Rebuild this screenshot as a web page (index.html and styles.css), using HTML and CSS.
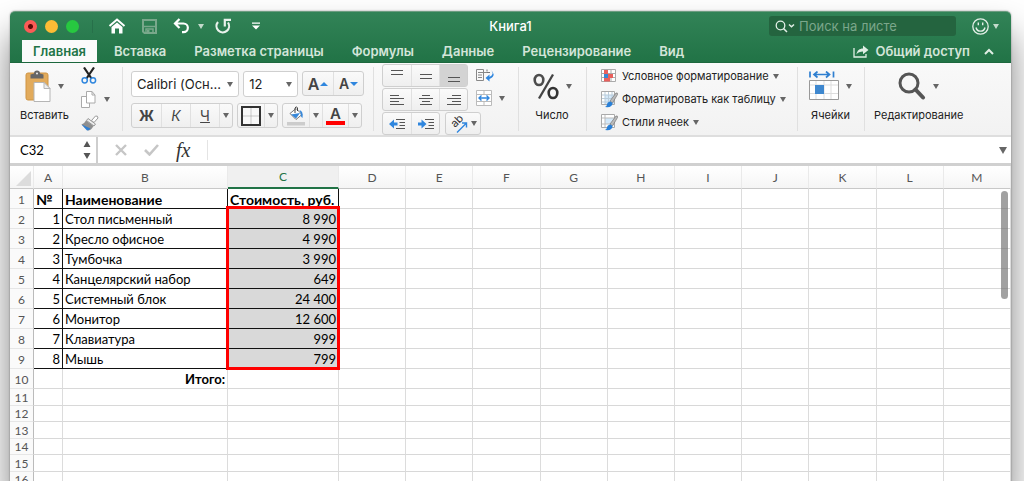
FILE: index.html
```html
<!DOCTYPE html>
<html lang="ru">
<head>
<meta charset="utf-8">
<meta name="viewport" content="width=device-width, initial-scale=1">
<title>Книга1</title>
<link rel="stylesheet" href="styles.css">
</head>
<body>
<main class="window">
  <header class="top">
    <div class="titlebar">
      <div class="title-left">
        <div class="lights">
          <button class="light red" aria-label="Закрыть"></button>
          <button class="light yellow" aria-label="Свернуть"></button>
          <button class="light green" aria-label="Развернуть"></button>
        </div>
        <button class="plain home" aria-label="Домой"><svg width="18" height="16" viewBox="0 0 18 16"><path d="M1.500 8 9 1.500l7.500 6.500" fill="none" stroke="#fff" stroke-width="2"/><path d="M3.500 9 9 4.500 14.500 9v6.500H11v-5H7v5H3.500z" fill="#fff"/></svg></button>
        <button class="plain save" aria-label="Сохранить"><svg width="15" height="15" viewBox="0 0 15 15"><path d="M1 1h13v13H2.500L1 12.500z" fill="none" stroke="#79a88b" stroke-width="2"/><path d="M1 7.500h13M4 14v-4h7v4" fill="none" stroke="#79a88b" stroke-width="1.500"/><path d="M5 11h2.500v3H5z" fill="#79a88b"/></svg></button>
        <button class="plain undo" aria-label="Отменить"><svg width="18" height="16" viewBox="0 0 18 16"><path d="M6.500 1 2 5.500 6.500 10M2.500 5.500h8a4.300 4.300 0 0 1 0 8.700H9" fill="none" stroke="#fff" stroke-width="2.200"/></svg><i class="caret pale"></i></button>
        <button class="plain redo" aria-label="Повторить"><svg width="17" height="16" viewBox="0 0 17 16"><path d="M3 4A6.300 6.300 0 1 0 13 4.500M9.800 8.500V1.800H16" fill="none" stroke="#e9f2ec" stroke-width="2.200"/></svg></button>
        <button class="plain" aria-label="Настройка панели"><svg width="8" height="8" viewBox="0 0 8 8"><path d="M0 .5h8v1.300H0zM0 3.500h8L4 7.500z" fill="#fff"/></svg></button>
      </div>
      <h1 class="title">Книга1</h1>
      <div class="title-right">
        <label class="search"><svg width="20" height="13" viewBox="0 0 20 13"><circle cx="5.500" cy="5.500" r="4.300" fill="none" stroke="#e3efe7" stroke-width="1.300"/><path d="m8.500 8.500 3.500 3.500M14 4.500l2.500 2.300L19 4.500" fill="none" stroke="#e3efe7" stroke-width="1.500"/></svg><input type="search" placeholder="Поиск на листе" aria-label="Поиск на листе"></label>
        <button class="plain face" aria-label="Отзыв"><svg width="17" height="17" viewBox="0 0 17 17"><circle cx="8.500" cy="8.500" r="7.700" fill="none" stroke="#e3efe7" stroke-width="1.300"/><path d="M4 9.500a4.600 4.600 0 0 0 9 0M6.300 4.500v2.800M10.700 4.500v2.800" fill="none" stroke="#e3efe7" stroke-width="1.400"/></svg><i class="caret pale"></i></button>
      </div>
    </div>
    <nav class="tabs">
      <button class="tab active">Главная</button>
      <button class="tab">Вставка</button>
      <button class="tab">Разметка страницы</button>
      <button class="tab">Формулы</button>
      <button class="tab">Данные</button>
      <button class="tab">Рецензирование</button>
      <button class="tab">Вид</button>
      <button class="tab share"><svg width="16" height="13" viewBox="0 0 16 13"><path d="M1 3v9h12V9" fill="none" stroke="#dfeee4" stroke-width="1.300"/><path d="M3.500 9.500C4 5.500 6.500 3.500 10 3.500V.5L15.500 5 10 9.300V6.500C7 6.500 5 7.300 3.500 9.500z" fill="#dfeee4"/></svg>Общий доступ</button>
      <button class="plain fold" aria-label="Свернуть ленту"><svg width="10" height="7" viewBox="0 0 10 7"><path d="m1 6 4-4 4 4" fill="none" stroke="#dfeee4" stroke-width="2"/></svg></button>
    </nav>
  </header>

  <section class="ribbon" aria-label="Главная">
    <div class="group clip">
      <button class="big">
        <span class="icon-row"><svg width="26" height="32" viewBox="0 0 26 32"><rect x="1" y="3" width="22" height="27" rx="2" fill="#e2ab5c" stroke="#cf9443"/><path d="M5.500 8.500V4.500L9 3.500a3 3 0 0 1 6 0l3.500 1v4z" fill="#666"/><circle cx="12" cy="3.400" r="1" fill="#eee"/><path d="M9 12.500h10l6 6v13H9z" fill="#fff" stroke="#b5b5b5"/><path d="M19 12.500v6h6z" fill="#eee" stroke="#b5b5b5"/></svg><i class="caret"></i></span>
        <span>Вставить</span>
      </button>
      <div class="clip-tools">
        <button class="plain" aria-label="Вырезать"><svg width="16" height="17" viewBox="0 0 16 17"><path d="m3 .5 7.500 11M13 .5 5.500 11.500" stroke="#222" stroke-width="2.200"/><circle cx="3.700" cy="13.300" r="2.600" fill="none" stroke="#2f86de" stroke-width="1.500"/><circle cx="12" cy="13.300" r="2.600" fill="none" stroke="#2f86de" stroke-width="1.500"/></svg></button>
        <button class="plain copy" aria-label="Копировать"><svg width="15" height="17" viewBox="0 0 15 17"><path d="M.5 5.500h5l3 3v8h-8z" fill="#fff" stroke="#aaa"/><path d="M5.500.5h5.500l3 3.500v8H5.500zM11 .5V4h3" fill="#fff" stroke="#aaa"/></svg><i class="caret"></i></button>
        <button class="plain" aria-label="Формат по образцу"><svg width="18" height="16" viewBox="0 0 18 16"><path d="m10.500 5.500 4-4.500q2.500-.5 2.500 2L13 7.500z" fill="#fff" stroke="#999"/><path d="M7 3.500 14.500 9l-1.500 2-7.500-5.500z" fill="#eee" stroke="#999"/><path d="M5 5.500 12.500 11Q10 15.500 7 15.500L.5 9.500Q3.500 8.500 5 5.500z" fill="#8f8f8f"/><path d="M.5 9.500 9.500 13.500Q8 15.800 6 15.500z" fill="#2f7fd3"/></svg></button>
      </div>
    </div>

    <div class="group font">
      <div class="row">
        <label class="combo family"><select aria-label="Шрифт"><option>Calibri (Осн...</option></select><i class="caret"></i></label>
        <label class="combo size"><select aria-label="Размер"><option>12</option></select><i class="caret"></i></label>
        <div class="seg tall"><button class="w30" aria-label="Увеличить шрифт"><b class="a-big">A</b><i class="tri up"></i></button><button class="w30" aria-label="Уменьшить шрифт"><b class="a-mid">A</b><i class="tri down"></i></button></div>
      </div>
      <div class="row">
        <div class="seg tall"><button class="w29"><b>Ж</b></button><button class="w29"><em>К</em></button><button class="w29"><u>Ч</u></button><button class="w13" aria-label="Подчеркивание"><i class="caret"></i></button></div>
        <div class="seg tall"><button class="w26" aria-label="Границы"><svg width="20" height="20" viewBox="0 0 20 20"><path d="M1 1h18v18H1z" fill="#f8f8f8" stroke="#333" stroke-width="2"/><path d="M10 2.500v15M2.500 10h15" stroke="#999" stroke-dasharray="1 1"/></svg></button><button class="w13" aria-label="Вид границ"><i class="caret"></i></button></div>
        <div class="seg tall"><button class="w26" aria-label="Заливка"><svg width="20" height="20" viewBox="0 0 20 20"><path d="m4 7.500 6-5 6 6-6 5z" fill="#fff" stroke="#777"/><path d="m5 8.500 9-1.500-4 5.500z" fill="#3788da"/><path d="M9 7V2Q10.500-.5 11.500 2v3" fill="none" stroke="#444"/><path d="M13.500 4q4 1 3 8-2-1-2-5z" fill="#3788da"/><path d="M1 16h18v3.500H1z" fill="#ccc"/></svg></button><button class="w13" aria-label="Цвет заливки"><i class="caret"></i></button><button class="w26" aria-label="Цвет шрифта"><span class="font-color">A</span></button><button class="w13" aria-label="Выбор цвета шрифта"><i class="caret"></i></button></div>
      </div>
    </div>

    <div class="group align">
      <div class="align-top">
        <div class="align-rows">
          <div class="seg"><button class="w28" aria-label="По верхнему краю"><svg width="14" height="14"><path d="M1 1.500h12M1 5.500h12" stroke="#555"/></svg></button><button class="w28" aria-label="По середине"><svg width="14" height="14"><path d="M1 5.500h12M1 9.500h12" stroke="#555"/></svg></button><button class="w28 on" aria-label="По нижнему краю"><svg width="14" height="14"><path d="M1 8.500h12M1 12.500h12" stroke="#555"/></svg></button></div>
          <div class="seg"><button class="w28" aria-label="По левому краю"><svg width="14" height="14"><path d="M0 2.500h9M0 5.500h14M0 8.500h9M0 11.500h14" stroke="#555"/></svg></button><button class="w28" aria-label="По центру"><svg width="14" height="14"><path d="M3 2.500h8M0 5.500h14M3 8.500h8M1 11.500h12" stroke="#555"/></svg></button><button class="w28" aria-label="По правому краю"><svg width="14" height="14"><path d="M5 2.500h9M0 5.500h14M5 8.500h9M0 11.500h14" stroke="#555"/></svg></button></div>
        </div>
        <div class="align-side">
          <button class="plain" aria-label="Перенос текста"><svg width="19" height="14" viewBox="0 0 19 14"><path d="M.5 1.500h7v11h-7zM2 4.500h10M2 7h4M2 9.500h4" fill="none" stroke="#888"/><path d="M11 3.500V1.500M11 4.500h3" stroke="#777"/><path d="M15 2q4 4-1.500 7V6.500L9.500 10l4 3.500V11Q21 7.500 15 2z" fill="#2f86de"/></svg></button>
          <button class="plain merge" aria-label="Объединить"><svg width="16" height="16" viewBox="0 0 16 16"><path d="M.5.500h15v15H.5zM.5 4.500h15M.5 11.500h15M8 .5v4M8 11.500v4" fill="#fff" stroke="#bbb"/><path d="M3 8h10M5.500 5.500 3 8l2.500 2.500M10.500 5.500 13 8l-2.500 2.500" fill="none" stroke="#2f86de" stroke-width="1.400"/></svg><i class="caret"></i></button>
        </div>
      </div>
      <div class="row">
        <div class="seg"><button class="w28" aria-label="Уменьшить отступ"><svg width="16" height="12"><path d="M0 6 5 1.500v3h3.500v3H5v3z" fill="#2f86de"/><path d="M7 1.500h9M10.500 4.500H16M10.500 7.500H16M7 10.500h9" stroke="#555"/></svg></button><button class="w28" aria-label="Увеличить отступ"><svg width="16" height="12"><path d="M8.500 6l-5-4.500v3H0v3h3.500v3z" fill="#2f86de"/><path d="M7 1.500h9M10.500 4.500H16M10.500 7.500H16M7 10.500h9" stroke="#555"/></svg></button></div>
        <div class="seg"><button class="w34" aria-label="Ориентация"><svg class="orient" width="20" height="20" viewBox="0 0 20 20"><text class="ab" transform="translate(6 14) rotate(-45)">ab</text><path d="M8 18.500 17 9.500M13 9h4.500v4.500" fill="none" stroke="#2f86de" stroke-width="1.400"/></svg><i class="caret"></i></button></div>
      </div>
    </div>

    <div class="group number">
      <button class="big"><span class="icon-row"><svg width="26" height="27" viewBox="0 0 26 27"><ellipse cx="6" cy="7" rx="4.300" ry="5" fill="none" stroke="#4d4d4d" stroke-width="2.600"/><ellipse cx="20" cy="20" rx="4.300" ry="5" fill="none" stroke="#333" stroke-width="2.600"/><path d="M20 1.500 6 25.500" stroke="#444" stroke-width="2.300"/></svg><i class="caret"></i></span><span>Число</span></button>
    </div>

    <div class="group styles">
      <button class="line"><svg width="18" height="18" viewBox="0 0 18 18"><path d="M1.500 2.500h14v12h-14zM1.500 6.500h14M1.500 10.500h14M6 2.500v12M11 2.500v12" fill="#fff" stroke="#aaa"/><path d="M4 3h4v4H4zM4 11h6v3.500H4z" fill="#e8605d"/><path d="M4 7h9v4H4z" fill="#e8605d"/><path d="M4 7h4v4H4z" fill="#3986d2"/></svg>Условное форматирование<i class="caret"></i></button>
      <button class="line"><svg width="18" height="18" viewBox="0 0 18 18"><path d="M1.500 1.500h13v13h-13z" fill="#fff" stroke="#aaa"/><path d="M5 5h9v9H5z" fill="#d3e8f9"/><path d="M5 2v12M8.500 2v12M12 2v12M2 5h12M2 8.500h12M2 12h12" stroke="#b9ccdb"/><path d="M10 11 16 3q2-.5 1.500 1.500L12.500 13z" fill="#bbb" stroke="#777" stroke-width=".7"/><path d="M5 17q2-1 2.500-4 2.500-3 5 0 0 5-7.500 4z" fill="#287fd7"/></svg>Форматировать как таблицу<i class="caret"></i></button>
      <button class="line"><svg width="18" height="18" viewBox="0 0 18 18"><path d="M1.500 1.500h13v13h-13z" fill="#fff" stroke="#aaa"/><path d="M5 5h9v6H5z" fill="#d3e8f9"/><path d="M5 2v12M2 5h12M2 11h12" stroke="#bbb"/><path d="M10 11 16 3q2-.5 1.500 1.500L12.500 13z" fill="#bbb" stroke="#777" stroke-width=".7"/><path d="M5 17q2-1 2.500-4 2.500-3 5 0 0 5-7.500 4z" fill="#287fd7"/></svg>Стили ячеек<i class="caret"></i></button>
    </div>

    <div class="group cells">
      <button class="big"><span class="icon-row"><svg width="30" height="30" viewBox="0 0 30 30"><path d="M1 .5v6M24.500.5v6M5 3.500h15.500M8.500.5 5 3.500l3.500 3M17 .5l3.500 3-3.500 3" fill="none" stroke="#2f7fd0" stroke-width="1.700"/><path d="M.5 9.500h29v19H.5z" fill="#fff" stroke="#999"/><path d="M7 10v18M15 10v18M22 10v18M1 14h28M1 22.500h28" stroke="#ddd"/><path d="M6 14h9v9H6z" fill="#3f88cf"/></svg><i class="caret"></i></span><span>Ячейки</span></button>
    </div>

    <div class="group edit">
      <button class="big"><span class="icon-row"><svg width="28" height="28" viewBox="0 0 28 28"><circle cx="11" cy="11" r="9" fill="none" stroke="#555" stroke-width="3"/><path d="m17.500 17.500 7.500 8" stroke="#555" stroke-width="4" stroke-linecap="round"/></svg><i class="caret"></i></span><span>Редактирование</span></button>
    </div>
  </section>

  <section class="formula">
    <label class="namebox"><input value="C32" aria-label="Имя ячейки"><svg width="8" height="18" viewBox="0 0 8 18"><path d="M4 0 7.500 6h-7zM.5 12h7L4 18z" fill="#555"/></svg></label>
    <button class="plain" aria-label="Отмена"><svg width="12" height="12"><path d="m1 1 10 10M11 1 1 11" stroke="#c6c6c6" stroke-width="2.400"/></svg></button>
    <button class="plain" aria-label="Ввод"><svg width="15" height="12"><path d="m1 6 4.500 4.500L14 1" fill="none" stroke="#c6c6c6" stroke-width="2.600"/></svg></button>
    <button class="plain fx" aria-label="Вставить функцию">fx</button>
    <input class="entry" aria-label="Строка формул">
    <button class="plain expand" aria-label="Развернуть строку формул"><i class="caret large"></i></button>
  </section>

  <section class="sheet">
    <table class="grid">
      <colgroup><col class="col-head"><col class="col-a"><col class="col-b"><col class="col-c"><col span="10"></colgroup>
      <thead><tr id="letters"><th class="corner"><svg width="15" height="15"><path d="M15 0v15H0z" fill="#dcdcdc"/></svg></th></tr></thead>
      <tbody id="rows"></tbody>
    </table>
    <div class="scroll"></div>
  </section>
</main>
<script src="script.js"></script>
</body>
</html>
```
FILE: styles.css
```css
* { box-sizing: border-box; }
body {
  margin: 0;
  height: 100vh;
  padding: 11px 13px 0 10px;
  overflow: hidden;
  background: #fff;
  font-family: Inter, "Liberation Sans", sans-serif;
  font-size: 11px;
  color: #222;
}
button, input, select { font: inherit; color: inherit; border: 0; padding: 0; margin: 0; background: none; outline: 0; }
button { display: flex; align-items: center; justify-content: center; }
svg { display: block; flex: none; }
.window {
  border-radius: 5px 5px 0 0;
  box-shadow: 0 0 2px rgba(0, 0, 0, .4), 0 24px 36px rgba(0, 0, 0, .5);
  background: #fff;
}
.row { display: flex; }

.caret { display: block; flex: none; border: 3px solid transparent; border-top: 5px solid #666; border-bottom: 0; }
.caret.pale { border-top-color: #c3dacb; }
.caret.large { border-width: 7px 4px 0; }

/* Title bar and tabs */
.top {
  background: linear-gradient(#328357, #217346);
  border-radius: 5px 5px 0 0;
  border-top: 1px solid #6c9c80;
  border-bottom: 1px solid #1d683e;
}
.titlebar { display: grid; grid-template-columns: 1fr auto 1fr; align-items: center; height: 28px; }
.title-left { display: flex; align-items: center; padding-left: 14px; }
.lights { display: flex; gap: 8px; padding-right: 13px; margin-right: 15px; border-right: 1px solid #27704a; }
.light { width: 13px; height: 13px; border-radius: 50%; }
.red { background: radial-gradient(circle, #5d0906 2px, #fc5b56 3px); }
.yellow { background: #fdbc35; }
.green { background: #27c840; }
.home { margin-right: 16px; }
.save { margin-right: 16px; }
.undo { gap: 7px; margin-right: 11px; }
.redo { margin-right: 20px; }
.title { margin: 0; font-size: 13px; font-weight: 500; color: #fff; }
.title-right { display: flex; justify-content: flex-end; align-items: center; gap: 16px; padding-right: 12px; }
.search { display: flex; align-items: center; gap: 4px; width: 187px; height: 20px; padding: 0 6px; border-radius: 3px; background: #24643f; }
.search input { flex: 1; min-width: 0; font-size: 13px; }
.search input::placeholder { color: #7ba78b; opacity: 1; }
.face { gap: 4px; }
.tabs { display: flex; padding: 0 17px 0 12px; height: 22px; gap: 6px; }
.tab { padding: 0 11px; font-size: 13px; font-weight: 600; color: #d3e5d9; white-space: nowrap; }
.tab.active { background: #fafafa; color: #217346; }
.share { margin-left: auto; gap: 6px; padding: 0 8px; }

/* Ribbon */
.ribbon { display: flex; height: 74px; background: linear-gradient(#f9f9f9, #f2f2f2); border-bottom: 2px solid #dedede; }
.group { display: flex; flex: none; padding: 0 10px; }
.group + .group { background: linear-gradient(#e0e0e0, #e0e0e0) 0 4px / 1px 64px no-repeat; }
.big { flex-direction: column; justify-content: flex-start; gap: 5px; padding-top: 6px; white-space: nowrap; }
.icon-row { display: flex; align-items: center; height: 34px; gap: 7px; }
.clip { width: 112px; gap: 12px; }
.clip-tools { display: flex; flex-direction: column; justify-content: space-between; align-items: flex-start; padding: 4px 0; }
.copy { gap: 8px; }
.font { width: 251px; flex-direction: column; gap: 6px; padding: 8px 9px 0; }
.font .row { gap: 4px; }
.combo { display: flex; align-items: center; height: 26px; padding: 0 5px; background: #fff; border: 1px solid #cfcfcf; border-radius: 3px; }
.combo select { flex: 1; min-width: 0; height: 22px; appearance: none; font-size: 13px; }
.family { width: 109px; }
.size { width: 55px; }
.seg { display: flex; height: 23px; border: 1px solid #cfcfcf; border-radius: 3px; background: linear-gradient(#fafafa, #efefef); }
.seg.tall { height: 25px; }
.seg button + button { border-left: 1px solid #e0e0e0; }
.seg .on { background: #d3d3d3; }
.w13 { width: 13px; }
.w26 { width: 26px; }
.w28 { width: 28px; }
.w29 { width: 29px; }
.w30 { width: 30px; }
.w34 { width: 34px; gap: 2px; }
.seg b, .seg em, .seg u { font-size: 14px; color: #444; }
.seg .a-big { font-size: 16px; font-weight: 600; }
.seg .a-mid { font-weight: 600; }
.tri { border: 4px solid transparent; margin-left: 1px; }
.tri.up { border-top: 0; border-bottom-color: #2f86de; }
.tri.down { border-bottom: 0; border-top-color: #2f86de; }
.font-color { width: 19px; border-bottom: 4px solid #f00; font-size: 15px; font-weight: 600; line-height: 15px; color: #444; }
.align { width: 145px; flex-direction: column; gap: 1px; padding: 1px 9px 0; }
.align .row { gap: 5px; }
.align-top { display: flex; gap: 8px; }
.align-rows { display: flex; flex-direction: column; gap: 1px; }
.orient { overflow: visible; }
.ab { font-size: 11px; fill: #333; }
.align-side { display: flex; flex-direction: column; align-items: flex-start; gap: 8px; padding-top: 4px; }
.merge { gap: 7px; }
.number { width: 68px; justify-content: center; }
.styles { width: 211px; flex-direction: column; align-items: flex-start; justify-content: space-between; padding: 4px 14px; }
.line { height: 18px; gap: 4px; white-space: nowrap; }
.cells { width: 67px; justify-content: center; }

/* Formula bar */
.formula { display: flex; align-items: center; height: 29px; border-bottom: 3px solid #d0d0d0; gap: 17px; }
.namebox { display: flex; align-items: center; align-self: stretch; width: 88px; padding: 0 5px 0 10px; border-right: 2px solid #cecece; }
.namebox input { flex: 1; min-width: 0; font: 13px Lato, "Noto Sans", sans-serif; color: #000; }
.fx { font: italic 20px "Liberation Serif", serif; color: #333; }
.entry { flex: 1; min-width: 0; height: 20px; border-left: 1px solid #e4e4e4; }
.expand { padding-right: 4px; }

/* Sheet */
.sheet { position: relative; }
.grid { width: 100%; table-layout: fixed; border-spacing: 0; font: 13px Lato, "Noto Sans", sans-serif; color: #000; }
.col-head { width: 24px; }
.col-a { width: 29px; }
.col-b { width: 165px; }
.col-c { width: 111px; }
.grid th, .grid td { padding: 0; line-height: 15px; white-space: nowrap; border-right: 1px solid #dcdcdc; border-bottom: 1px solid #d8d8d8; }
.grid thead th { height: 23px; font-size: 12px; font-weight: 400; color: #555; background: linear-gradient(#fff, #f5f5f5); border-right-color: #eaeaea; border-bottom-color: #c8c8c8; }
.grid thead .picked { background: #f0f0f0; color: #217346; border-bottom: 2px solid #217346; }
.grid .corner { vertical-align: bottom; padding: 0 2px 2px 6px; }
.grid tbody th { height: 16px; font-size: 12px; font-weight: 400; color: #555; background: #fafafa; border-right-color: #bbb; border-bottom-color: #e6e6e6; }
.grid .filled th { height: 20px; }
.grid .filled th, .grid .filled td { padding-top: 2px; }
.grid .wide th { height: 17px; }
.grid td.box { padding: 2px 2px 0; border-color: #111; }
.grid .num { text-align: right; }
.grid .strong { font-size: 14px; font-weight: 700; }
.grid .total { padding: 0 2px; text-align: right; font-weight: 700; }
.grid .cost { background: #d9d9d9; }
.grid .first { position: relative; }
/* Red frame over the eight cost cells */
.frame { position: absolute; top: -3px; left: -2px; right: -2px; height: 164px; border: 3px solid #f00; }
.scroll { position: absolute; top: 25px; right: 3px; width: 7px; height: 108px; border-radius: 4px; background: rgba(110, 110, 110, .65); }
```
FILE: script.js
```js
const letters = [..."ABCDEFGHIJKLM"];
const items = [
  ["Стол письменный", "8 990"],
  ["Кресло офисное", "4 990"],
  ["Тумбочка", "3 990"],
  ["Канцелярский набор", "649"],
  ["Системный блок", "24 400"],
  ["Монитор", "12 600"],
  ["Клавиатура", "999"],
  ["Мышь", "799"]
];

function add(parent, tag, className, text) {
  const el = document.createElement(tag);
  if (className) el.className = className;
  if (text) el.textContent = text;
  parent.append(el);
  return el;
}

const head = document.getElementById("letters");
letters.forEach(l => add(head, "th", l === "C" ? "picked" : "", l));

const body = document.getElementById("rows");
for (let n = 1; n <= 16; n++) {
  const row = add(body, "tr", n <= 10 ? "filled" : n % 2 ? "wide" : "");
  add(row, "th", "", String(n));
  const item = items[n - 2];
  if (n === 1) {
    ["№", "Наименование", "Стоимость, руб."].forEach(t => add(row, "td", "box strong", t));
  } else if (item) {
    add(row, "td", "box num", String(n - 1));
    add(row, "td", "box", item[0]);
    const cost = add(row, "td", "box num cost" + (n === 2 ? " first" : ""), item[1]);
    if (n === 2) add(cost, "div", "frame");
  } else {
    add(row, "td");
    add(row, "td", n === 10 ? "total" : "", n === 10 ? "Итого:" : "");
    add(row, "td");
  }
  for (let c = 3; c < letters.length; c++) add(row, "td");
}
```
